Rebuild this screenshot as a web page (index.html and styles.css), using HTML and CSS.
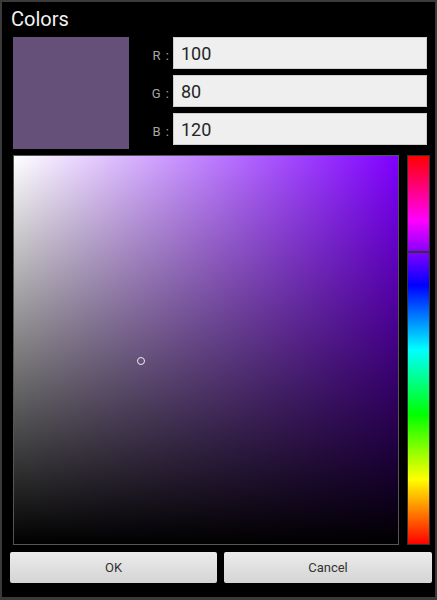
FILE: index.html
```html
<!DOCTYPE html>
<html lang="en">

<head>
    <meta charset="UTF-8">
    <meta name="viewport" content="width=device-width, initial-scale=1.0">
    <title>Colors</title>

    <link rel="stylesheet" href="styles.css">
</head>

<body>

    <div class="dialog">
        <h1 class="title">Colors</h1>

        <div class="top">
            <div class="swatch"></div>
            <div class="fields">
                <div class="field">
                    <span class="label">R :</span>
                    <div class="input">100</div>
                </div>
                <div class="field">
                    <span class="label">G :</span>
                    <div class="input">80</div>
                </div>
                <div class="field">
                    <span class="label">B :</span>
                    <div class="input">120</div>
                </div>
            </div>
        </div>

        <div class="picker">
            <div class="sv">
                <div class="cursor"></div>
            </div>
            <div class="hue">
                <div class="hue-mark"></div>
            </div>
        </div>

        <div class="buttons">
            <button class="btn">OK</button>
            <button class="btn">Cancel</button>
        </div>
    </div>

</body>

</html>
```

FILE: styles.css
```css
body {
    margin: 0;
    padding: 0;
    background-color: #000;
    font-family: 'Roboto', 'Liberation Sans', sans-serif;
}

.dialog {
    width: 437px;
    height: 600px;
    box-sizing: border-box;
    border: 2px solid #3a3a3a;
    border-bottom-width: 3px;
    padding: 0 3px 0 8px;
    display: flex;
    flex-direction: column;
}

.title {
    margin: 0;
    height: 35px;
    padding-left: 1px;
    font-size: 20px;
    font-weight: normal;
    line-height: 35px;
    color: #f2f2f2;
}

.top {
    display: flex;
    padding-left: 3px;
    height: 112px;
}

.swatch {
    width: 116px;
    height: 112px;
    background-color: rgb(100, 80, 120);
}

.fields {
    display: flex;
    flex-direction: column;
    gap: 6px;
    flex: 1;
}

.field {
    display: flex;
    align-items: center;
    height: 32px;
}

.label {
    width: 41px;
    padding-right: 3px;
    text-align: right;
    font-size: 13px;
    color: #a8a8a8;
    letter-spacing: 1px;
    padding-top: 5px;
}

.input {
    width: 254px;
    height: 32px;
    box-sizing: border-box;
    background-color: #efefef;
    border: 1px solid #cfcfcf;
    padding-left: 7px;
    font-size: 18px;
    line-height: 31px;
    color: #262626;
}

.picker {
    display: flex;
    margin-top: 6px;
    padding-left: 3px;
    height: 390px;
}

.sv {
    position: relative;
    width: 386px;
    height: 390px;
    box-sizing: border-box;
    border: 1px solid #555;
    background:
        linear-gradient(to bottom, rgba(0, 0, 0, 0), #000),
        linear-gradient(to right, #fff, rgb(127, 0, 255));
}

.cursor {
    position: absolute;
    left: 123px;
    top: 201px;
    width: 6px;
    height: 6px;
    border: 1.5px solid #eee;
    border-radius: 50%;
}

.hue {
    position: relative;
    margin-left: 8px;
    width: 23px;
    height: 390px;
    box-sizing: border-box;
    border: 1px solid #333;
    background: linear-gradient(to bottom, #f00, #f0f, #00f, #0ff, #0f0, #ff0, #f00);
}

.hue-mark {
    position: absolute;
    left: -1px;
    right: -1px;
    top: 95px;
    height: 2px;
    background-color: #333;
}

.buttons {
    display: flex;
    gap: 7px;
    margin-top: 7px;
}

.btn {
    width: 207px;
    height: 31px;
    border: none;
    border-radius: 2px;
    background: linear-gradient(to bottom, #ececec, #d4d4d4);
    font-family: 'Roboto', 'Liberation Sans', sans-serif;
    font-size: 13px;
    color: #333;
}

.btn + .btn {
    width: 208px;
}
```
